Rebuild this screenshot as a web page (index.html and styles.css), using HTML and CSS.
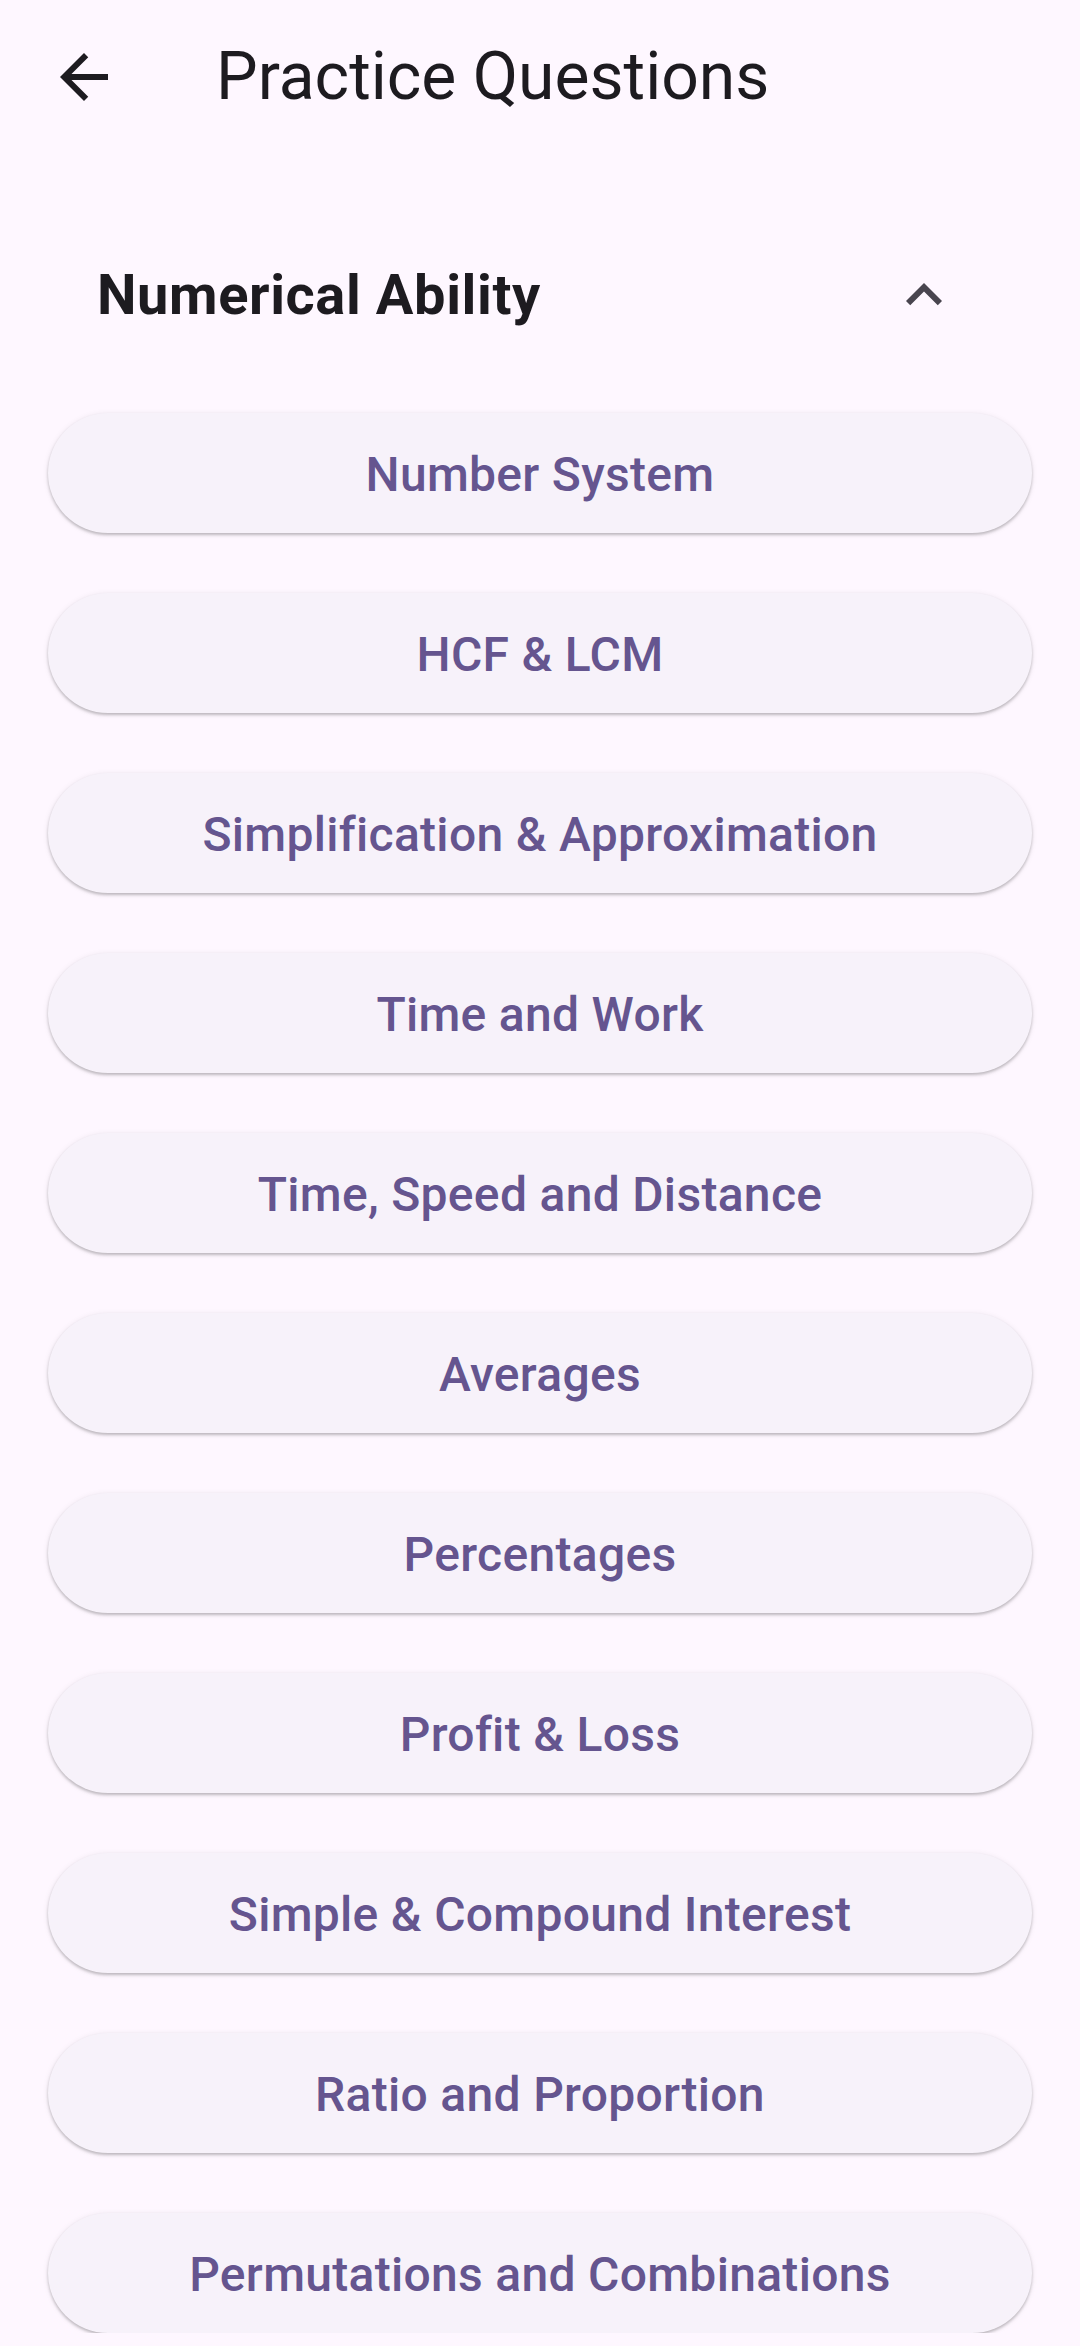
FILE: index.html
```html
<!DOCTYPE html>
<html>
<head>
<meta charset="utf-8">
<link rel="stylesheet" href="styles.css">
</head>
<body>
<header class="appbar">
  <svg class="back" viewBox="0 0 24 24" width="72" height="72"><path d="M20 11H7.83l5.59-5.59L12 4l-8 8 8 8 1.41-1.41L7.83 13H20v-2z" fill="#1d1b20"/></svg>
  <h1 class="title">Practice Questions</h1>
</header>
<main class="content">
  <div class="section-head">
    <h2 class="section-title">Numerical Ability</h2>
    <svg class="chevron" viewBox="0 0 24 24" width="72" height="72"><path d="M12 8l-6 6 1.41 1.41L12 10.83l4.59 4.58L18 14z" fill="#49454f"/></svg>
  </div>
  <div class="list">
    <button class="item">Number System</button>
    <button class="item">HCF &amp; LCM</button>
    <button class="item">Simplification &amp; Approximation</button>
    <button class="item">Time and Work</button>
    <button class="item">Time, Speed and Distance</button>
    <button class="item">Averages</button>
    <button class="item">Percentages</button>
    <button class="item">Profit &amp; Loss</button>
    <button class="item">Simple &amp; Compound Interest</button>
    <button class="item">Ratio and Proportion</button>
    <button class="item">Permutations and Combinations</button>
  </div>
</main>
</body>
</html>
```
FILE: styles.css
```css
html, body {
  margin: 0;
  padding: 0;
  background: #fef7ff;
  font-family: Roboto, "Noto Sans", sans-serif;
  overflow: hidden;
}
.appbar {
  height: 154px;
  display: flex;
  align-items: center;
  padding-left: 48px;
}
.back {
  flex: none;
  display: block;
}
.title {
  margin: 0 0 0 96px;
  font-size: 66px;
  line-height: 1;
  font-weight: 400;
  color: #1d1b20;
}
.content {
  display: flex;
  flex-direction: column;
}
.section-head {
  margin-top: 93px;
  height: 96px;
  display: flex;
  align-items: center;
  padding-left: 97px;
  padding-right: 120px;
}
.section-title {
  margin: 0;
  flex: 1;
  font-size: 56px;
  line-height: 1;
  font-weight: 700;
  color: #1d1b20;
  letter-spacing: 0.6px;
}
.chevron {
  flex: none;
  display: block;
}
.list {
  margin-top: 70px;
  display: flex;
  flex-direction: column;
  gap: 60px;
  padding: 0 48px;
}
.item {
  height: 120px;
  border: none;
  border-radius: 60px;
  background: #f7f2fa;
  box-shadow: 0 2px 3px rgba(0,0,0,0.22), 0 1px 6px rgba(0,0,0,0.08);
  color: #65558f;
  font-family: Roboto, "Noto Sans", sans-serif;
  font-size: 48px;
  font-weight: 500;
  letter-spacing: 0.3px;
  padding: 3px 0 0;
}
```
